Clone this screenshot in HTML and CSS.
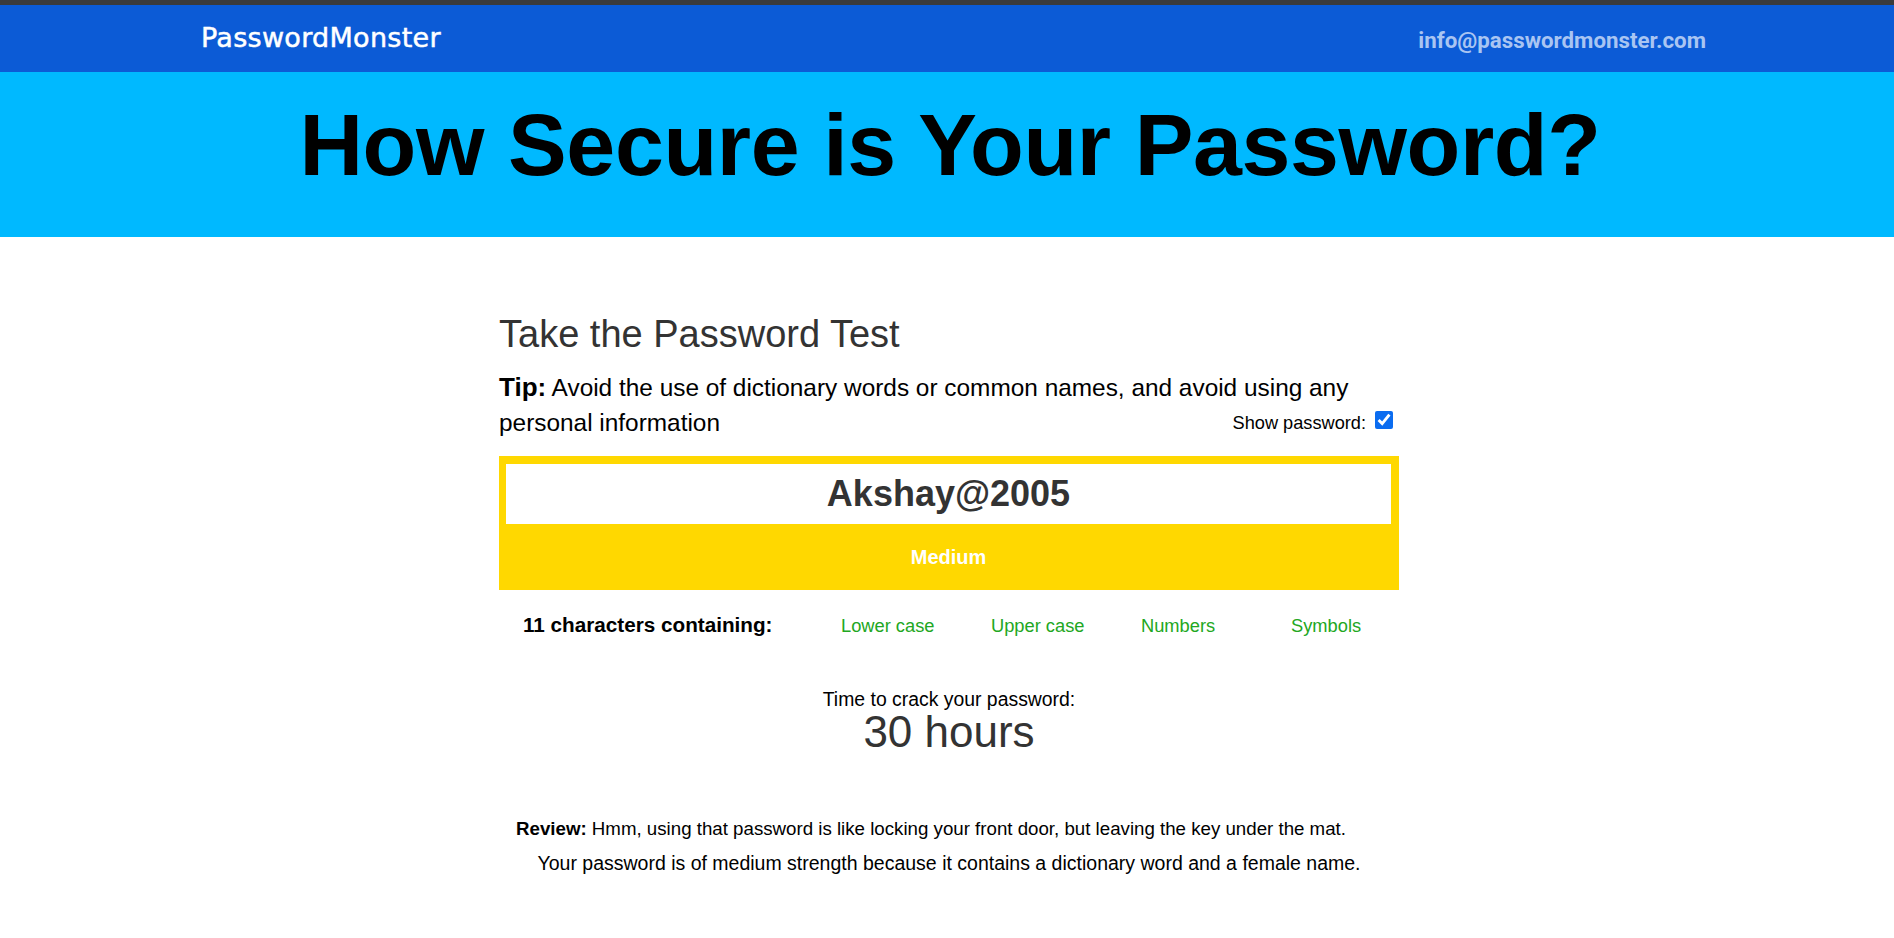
FILE: index.html
```html
<!DOCTYPE html>
<html lang="en">
<head>
<meta charset="utf-8">
<title>How Secure is Your Password? - PasswordMonster</title>
<link rel="stylesheet" href="styles.css">
</head>
<body>
<div class="topline"></div>
<header class="site-header">
  <div class="logo">PasswordMonster</div>
  <a class="email" href="#">info@passwordmonster.com</a>
</header>
<section class="hero">
  <h1 class="hero-title">How Secure is Your Password?</h1>
</section>
<main class="main">
  <div class="test">
    <h2 class="test-title">Take the Password Test</h2>
    <p class="tip"><span class="tip-label">Tip:</span> Avoid the use of dictionary words or common names, and avoid using any personal information <label class="show"><span>Show password:</span><input class="show-box" type="checkbox" checked></label></p>
    <div class="meter">
      <div class="pw-field">Akshay@2005</div>
      <div class="strength">Medium</div>
    </div>
    <div class="chars">
      <div class="chars-label">11 characters containing:</div>
      <div class="chars-item">Lower case</div>
      <div class="chars-item">Upper case</div>
      <div class="chars-item">Numbers</div>
      <div class="chars-item">Symbols</div>
    </div>
    <div class="crack">
      <div class="crack-label">Time to crack your password:</div>
      <div class="crack-time">30 hours</div>
    </div>
    <div class="review">
      <p class="review-line review-first"><b>Review:</b> Hmm, using that password is like locking your front door, but leaving the key under the mat.</p>
      <p class="review-line review-second">Your password is of medium strength because it contains a dictionary word and a female name.</p>
    </div>
  </div>
</main>
</body>
</html>
```

FILE: styles.css
```css
* { box-sizing: border-box; }
html, body { margin: 0; padding: 0; background: #ffffff; }
body { font-family: "Liberation Sans", Arial, sans-serif; color: #000; }

.topline { height: 5px; background: #3b3b3b; }

.site-header {
  height: 67px;
  background: #0c5bd6;
  display: flex;
  justify-content: space-between;
  align-items: flex-start;
  padding: 0 188px 0 201px;
}
.logo {
  margin-top: 20px;
  font-family: "DejaVu Sans", sans-serif;
  font-size: 27px;
  line-height: 26px;
  letter-spacing: 0.3px;
  color: #ffffff;
  -webkit-text-stroke: 0.5px #ffffff;
}
.email {
  margin-top: 24px;
  font-family: Roboto, "Liberation Sans", sans-serif;
  font-weight: 700;
  font-size: 22.3px;
  line-height: 22px;
  color: #a9c5f2;
  text-decoration: none;
}

.hero {
  height: 165px;
  background: #00b9ff;
  padding-top: 29px;
  padding-left: 6px;
  text-align: center;
}
.hero-title {
  margin: 0;
  font-family: "Liberation Sans", Arial, sans-serif;
  font-weight: 700;
  font-size: 88px;
  line-height: 88px;
  color: #000;
  letter-spacing: -0.4px;
}

.main { padding-left: 4px; }
.test { width: 900px; margin: 0 auto; padding-top: 74px; }

.test-title {
  margin: 0;
  font-weight: 400;
  font-size: 38px;
  line-height: 46px;
  color: #333;
}

.tip {
  margin: 13px 0 0;
  font-size: 24.4px;
  line-height: 35px;
  color: #000;
}
.tip-label { font-weight: 700; font-size: 26px; line-height: 1; }
.show {
  float: right;
  font-size: 18.2px;
  line-height: 36px;
  margin-right: 6px;
}
.show-box {
  width: 18px;
  height: 18px;
  margin: 0 0 1px 9px;
  vertical-align: baseline;
  accent-color: #0b6cf0;
}

.meter {
  margin-top: 16px;
  background: #ffd800;
  padding: 8px 8px 0 7px;
}
.pw-field {
  height: 60px;
  background: #ffffff;
  text-align: center;
  font-weight: 700;
  font-size: 36px;
  line-height: 60px;
  color: #333;
}
.strength {
  height: 66px;
  text-align: center;
  font-weight: 700;
  font-size: 20px;
  line-height: 66px;
  color: #ffffff;
}

.chars {
  margin-top: 20px;
  display: flex;
  align-items: baseline;
  height: 30px;
}
.chars-label {
  width: 342px;
  padding-left: 24px;
  font-weight: 700;
  font-size: 20.7px;
  line-height: 30px;
}
.chars-item {
  width: 150px;
  font-size: 18.3px;
  line-height: 30px;
  color: #22a722;
}
.chars-item:last-child { width: auto; }

.crack { margin-top: 49px; text-align: center; }
.crack-label { font-size: 19.4px; line-height: 21px; }
.crack-time { font-size: 44px; line-height: 44px; color: #333; }

.review { margin-top: 58px; text-align: center; }
.review-line {
  margin: 0;
  font-size: 18.7px;
  line-height: 34px;
}
.review-first { padding-right: 36px; }
.review-second { font-size: 19.5px; }
```
